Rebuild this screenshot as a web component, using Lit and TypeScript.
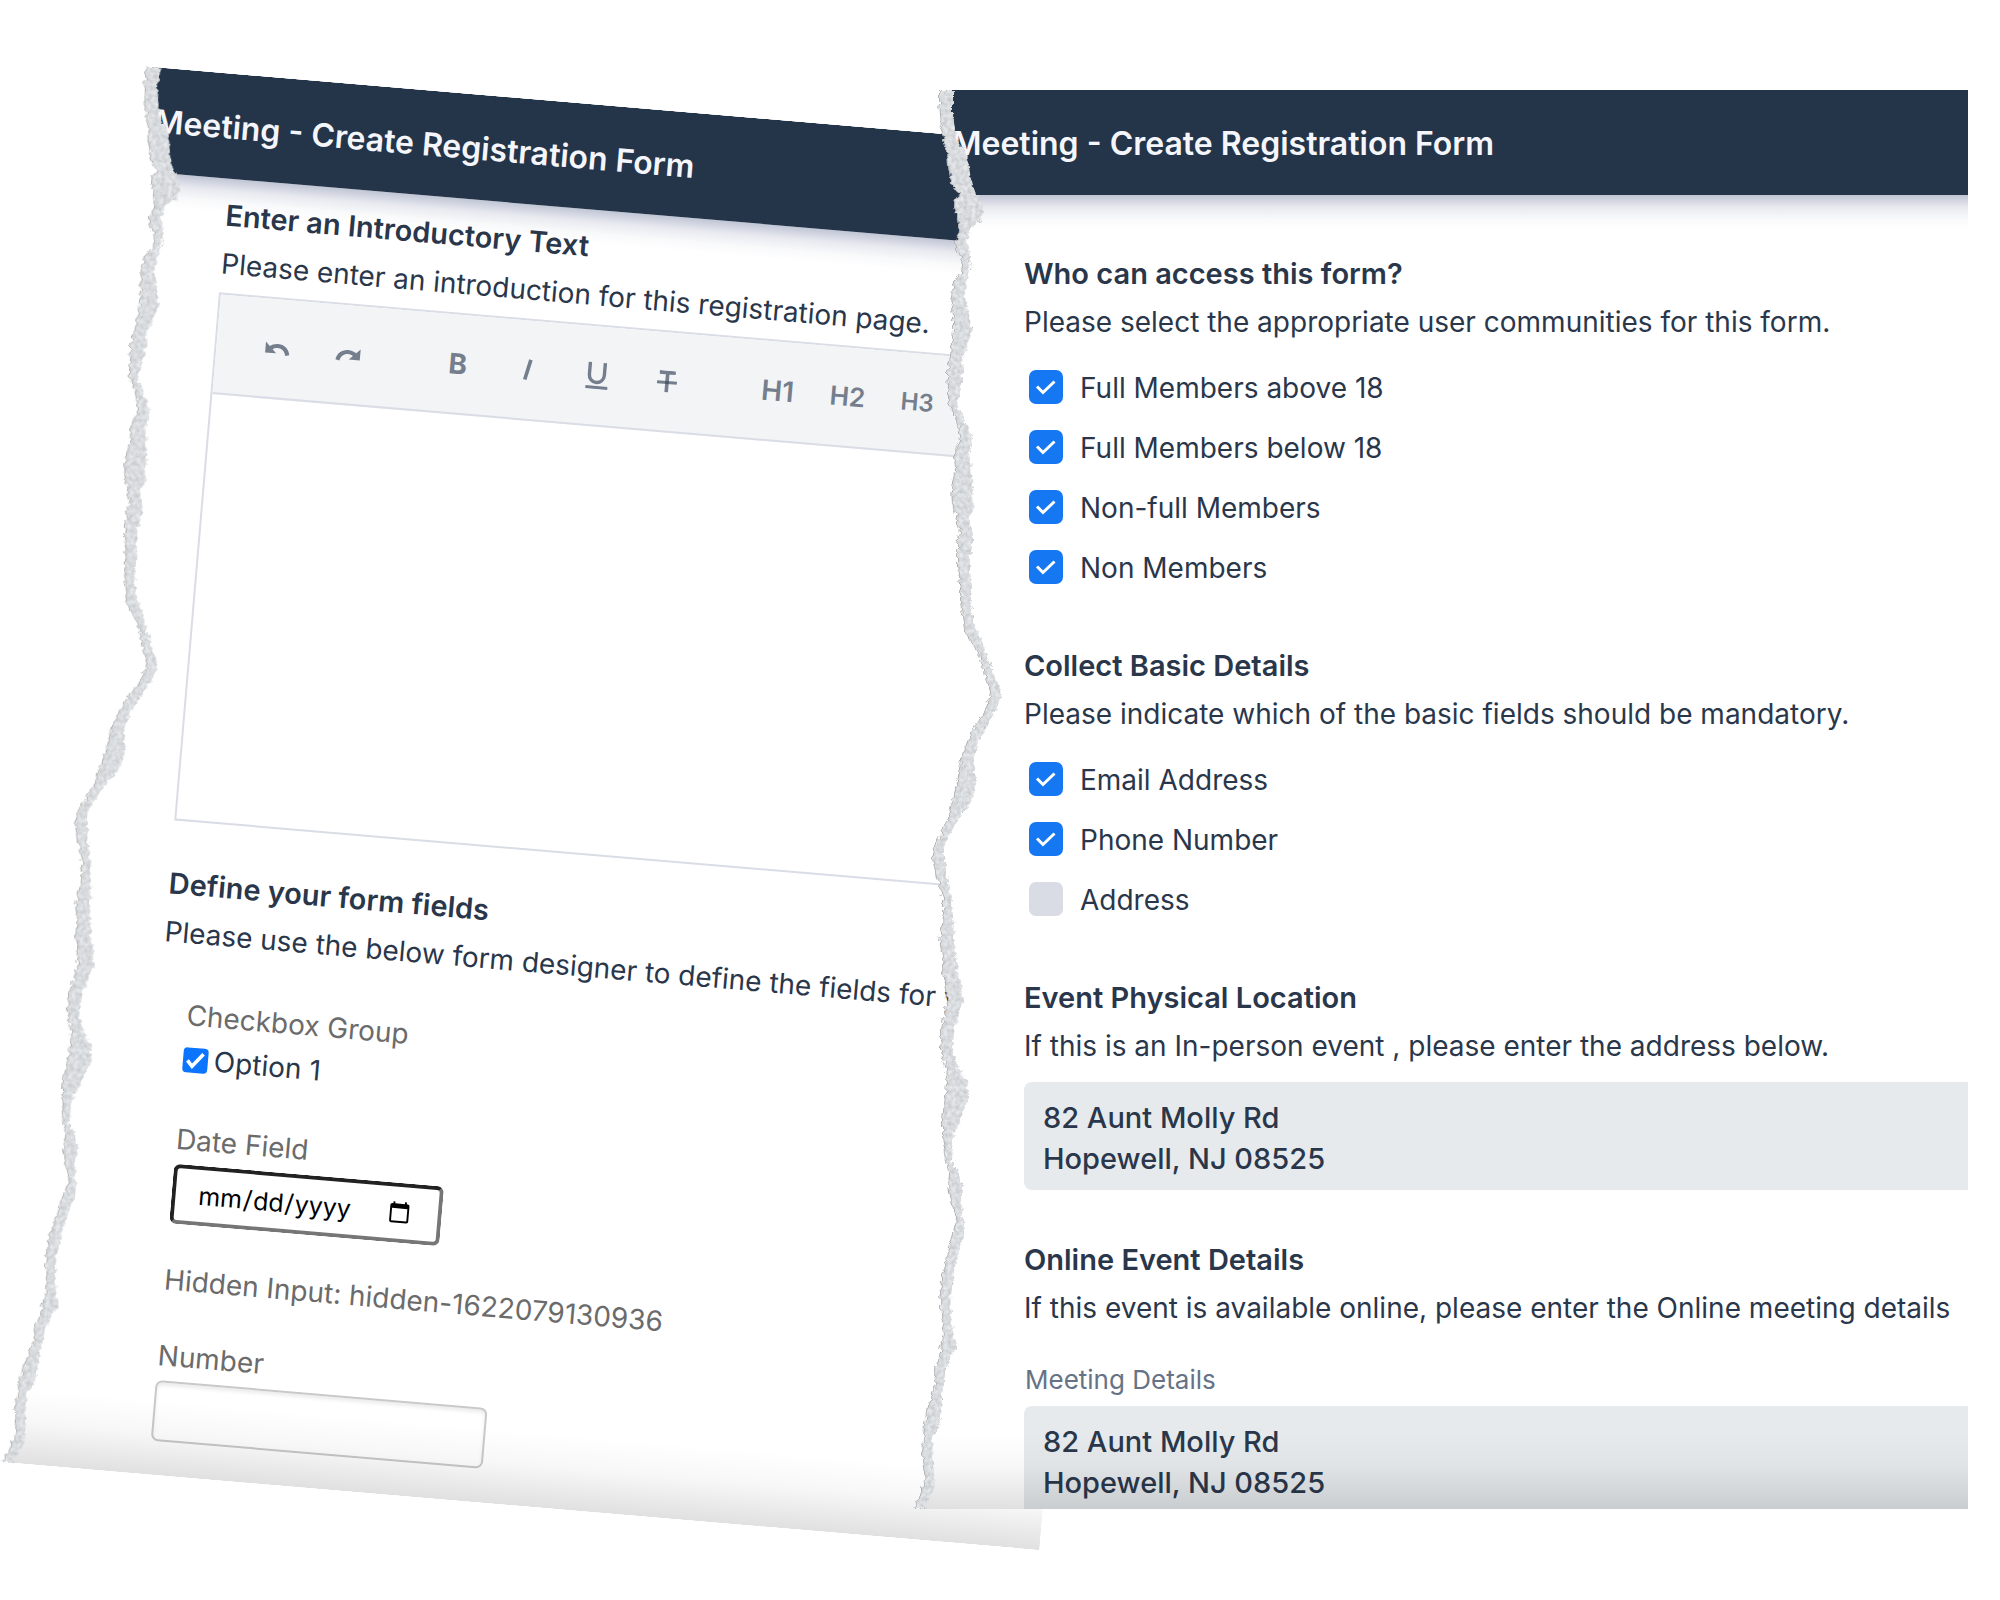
import { LitElement, html, svg, css, unsafeCSS } from "lit";
import { customElement, property } from "lit/decorators.js";

/* Torn edge profile: [y, outer x, inner x], measured down a sheet 1419 units tall. */
const TEAR_HEIGHT = 1419;
const TEAR: number[][] = [
  [0, 39, 53], [12, 39, 53], [24, 40, 53], [40, 41, 55], [53, 44, 58], [60, 47, 65], [77, 48, 69],
  [97, 52, 73], [103, 57, 76], [105, 60, 78], [109, 53, 80], [120, 55, 83], [130, 57, 80], [140, 59, 70],
  [150, 55, 67], [160, 55, 69], [167, 61, 70], [180, 62, 69], [193, 53, 66], [207, 51, 65],
  [227, 53, 69], [240, 53, 72], [257, 51, 67], [267, 50, 62], [283, 47, 63], [300, 48, 61],
  [315, 48, 56], [330, 57, 64], [347, 60, 72], [363, 54, 69], [380, 55, 71], [397, 51, 73],
  [415, 52, 74], [430, 57, 69], [443, 60, 73], [453, 57, 73], [465, 57, 70], [477, 57, 70],
  [493, 60, 71], [510, 60, 71], [527, 62, 72], [543, 65, 78], [563, 78, 86], [583, 84, 93],
  [602, 90, 102], [617, 87, 97], [635, 75, 87], [652, 68, 78], [670, 60, 73], [693, 57, 77],
  [712, 52, 71], [725, 48, 61], [743, 41, 50], [762, 31, 43], [777, 34, 46], [793, 39, 48],
  [810, 43, 52], [827, 43, 53], [852, 39, 54], [864, 43, 55], [877, 42, 57], [893, 45, 61],
  [910, 46, 64], [927, 44, 58], [943, 40, 53], [960, 41, 52], [977, 45, 58], [990, 46, 67],
  [1005, 45, 69], [1028, 42, 61], [1046, 42, 53], [1072, 45, 52], [1083, 49, 58], [1096, 48, 62],
  [1115, 52, 62], [1130, 57, 63], [1143, 52, 64], [1158, 49, 60], [1172, 46, 56], [1187, 41, 53],
  [1218, 40, 50], [1245, 44, 53], [1256, 41, 57], [1270, 38, 50], [1280, 34, 46], [1298, 35, 43],
  [1313, 29, 43], [1333, 24, 40], [1347, 23, 33], [1370, 22, 32], [1390, 25, 35], [1405, 20, 32],
  [1419, 14, 23],
];

const TEAR_SHAPE = [
  ...TEAR.map(([y, outer]) => `${outer},${y}`),
  ...[...TEAR].reverse().map(([y, , inner]) => `${inner},${y}`),
].join(" ");

const PAPER_CLIP = [
  ...TEAR.map(([y, outer, inner]) => `${Math.round((outer + inner) / 2)}px ${((y / TEAR_HEIGHT) * 100).toFixed(2)}%`),
  "100% 100%",
  "100% 0%",
].join(", ");

@customElement("torn-sheet")
export class TornSheet extends LitElement {
  static styles = css`
    :host {
      display: block;
      position: relative;
    }
    .paper {
      position: relative;
      background: linear-gradient(rgba(60, 75, 125, 0.32), rgba(60, 75, 125, 0.12) 35%, rgba(60, 75, 125, 0.03) 70%, rgba(60, 75, 125, 0)) 0 105px / 100% 34px no-repeat #fff;
      overflow: hidden;
      clip-path: polygon(${unsafeCSS(PAPER_CLIP)});
    }
    .bar {
      display: flex;
      align-items: center;
      box-sizing: border-box;
      height: 105px;
      padding: 3px 0 0 52px;
      background: #243449;
    }
    .title {
      margin: 0;
      font-size: 32px;
      line-height: 40px;
      font-weight: 600;
      color: #f4f6fc;
      white-space: nowrap;
    }
    .shade {
      position: absolute;
      inset: auto 0 0 0;
      height: 76px;
      background: linear-gradient(rgba(0, 0, 0, 0), rgba(0, 0, 0, 0.03) 45%, rgba(0, 0, 0, 0.12));
      pointer-events: none;
    }
    .tear {
      position: absolute;
      top: 0;
      left: 0;
      width: 110px;
      height: 100%;
      overflow: hidden;
      pointer-events: none;
    }
  `;

  @property() heading = "";

  render() {
    return html`
      <div class="paper">
        <header class="bar"><h1 class="title">${this.heading}</h1></header>
        <slot></slot>
        <div class="shade"></div>
      </div>
      <svg class="tear" viewBox="0 0 110 1419" preserveAspectRatio="none" aria-hidden="true">
        <defs>
          <filter id="fibre" x="-10" y="-10" width="130" height="1440" filterUnits="userSpaceOnUse" color-interpolation-filters="sRGB">
            <feTurbulence type="fractalNoise" baseFrequency="0.2" numOctaves="3" seed="4" result="ragged"></feTurbulence>
            <feDisplacementMap in="SourceGraphic" in2="ragged" scale="7" xChannelSelector="R" yChannelSelector="G" result="edge"></feDisplacementMap>
            <feTurbulence type="fractalNoise" baseFrequency="0.25" numOctaves="3" seed="9" result="grain"></feTurbulence>
            <feColorMatrix in="grain" type="matrix" values="0.2 0 0 0 0.75  0.2 0 0 0 0.76  0.2 0 0 0 0.77  0 0 0 0 1" result="tone"></feColorMatrix>
            <feComposite in="tone" in2="edge" operator="in" result="fibres"></feComposite>
            <feOffset in="edge" dx="1" dy="0" result="moved"></feOffset>
            <feComposite in="edge" in2="moved" operator="out" result="rim"></feComposite>
            <feColorMatrix in="rim" type="matrix" values="0 0 0 0 0.5  0 0 0 0 0.5  0 0 0 0 0.5  0 0 0 0.4 0" result="rimTone"></feColorMatrix>
            <feMerge>
              <feMergeNode in="fibres"></feMergeNode>
              <feMergeNode in="rimTone"></feMergeNode>
            </feMerge>
          </filter>
        </defs>
        <polygon points=${TEAR_SHAPE} fill="#dcdfe1" filter="url(#fibre)"></polygon>
      </svg>
    `;
  }
}

type Choice = { id: string; label: string; on: boolean };

const COMMUNITIES: Choice[] = [
  { id: "above", label: "Full Members above 18", on: true },
  { id: "below", label: "Full Members below 18", on: true },
  { id: "nonfull", label: "Non-full Members", on: true },
  { id: "non", label: "Non Members", on: true },
];

const BASICS: Choice[] = [
  { id: "email", label: "Email Address", on: true },
  { id: "phone", label: "Phone Number", on: true },
  { id: "address", label: "Address", on: false },
];

const ADDRESS = "82 Aunt Molly Rd\nHopewell, NJ 08525";

const undoIcon = svg`<path d="M1 3v11h11l-3.800-3.800c1.300-1.100 3-1.700 5-1.700 4 0 7.200 2.500 8.100 7.300l4-.9C24.500 8.600 19.700 4.500 13.300 4.500c-3.200 0-6 1.100-8.200 2.700z" fill="currentColor"/>`;

@customElement("app-root")
export class AppRoot extends LitElement {
  static styles = css`
    :host {
      display: block;
      overflow: hidden;
      background: #fff;
      color: #2a374b;
      font-family: Inter, "Liberation Sans", sans-serif;
      font-size: 28px;
    }
    .stage {
      display: grid;
      grid-template-columns: minmax(0, 793fr) minmax(0, 1068fr);
      align-items: start;
      padding: 63px 32px 91px 107px;
    }
    .back {
      width: 133%;
      transform: rotate(4.85deg);
      transform-origin: 0 0;
    }
    .front {
      margin-top: 27px;
    }
    .designer {
      padding: 13px 40px 34px 131px;
    }
    .setup {
      display: flex;
      flex-direction: column;
      gap: 46px;
      padding: 55px 0 0 124px;
    }
    h2,
    p {
      margin: 0;
      font-size: 28px;
      line-height: 48px;
      white-space: nowrap;
    }
    h2 {
      font-size: 29px;
      font-weight: 600;
    }
    .editor {
      margin: 5px 0 39px;
      border: 2px solid #dadde6;
    }
    .toolbar {
      display: flex;
      align-items: center;
      gap: 41px;
      height: 98px;
      padding-left: 26px;
      background: #f3f4f6;
      border-bottom: 2px solid #dadde6;
    }
    .tools {
      display: flex;
    }
    .tool {
      display: grid;
      place-items: center;
      width: 70px;
      height: 60px;
      padding: 0;
      border: 0;
      background: none;
      color: #747e8d;
      font: 600 28px/40px Inter, "Liberation Sans", sans-serif;
    }
    .bold {
      font-weight: 700;
    }
    .h2 {
      font-size: 26px;
    }
    .h3 {
      font-size: 24px;
    }
    .writing {
      display: block;
      box-sizing: border-box;
      width: 100%;
      height: 426px;
      padding: 20px;
      border: 0;
      resize: none;
      background: none;
      font: inherit;
    }
    .fields {
      display: flex;
      flex-direction: column;
      align-items: flex-start;
      gap: 36px;
      padding: 38px 0 0 29px;
    }
    .field {
      display: flex;
      flex-direction: column;
      align-items: flex-start;
      margin: 0;
      padding: 0;
      border: 0;
    }
    .caption {
      padding: 0;
      line-height: 40px;
      color: #6b6b6b;
      white-space: nowrap;
    }
    .option {
      display: flex;
      align-items: center;
      gap: 6px;
      height: 48px;
    }
    .box {
      display: grid;
      place-items: center;
    }
    .box > * {
      grid-area: 1 / 1;
    }
    .tick {
      appearance: none;
      width: 34px;
      height: 34px;
      margin: 0;
      border-radius: 7px;
      background: #d9dce5;
    }
    .tick:checked {
      background: #1677f2;
    }
    .tick + svg {
      visibility: hidden;
      pointer-events: none;
    }
    .tick:checked + svg {
      visibility: visible;
    }
    .small {
      width: 25px;
      height: 25px;
      border-radius: 4px;
    }
    .small:checked {
      background: #0b75ff;
    }
    .date,
    .number {
      box-sizing: border-box;
      margin-top: 5px;
      border-radius: 7px;
      background: #fff;
    }
    .date {
      width: 271px;
      height: 60px;
      padding: 0 24px 0 22px;
      border: 4px solid #767676;
      border-top-color: #222;
      border-left-color: #222;
      color: #000;
      font: 25px/36px Inter, "Liberation Sans", sans-serif;
    }
    .number {
      width: 333px;
      height: 61px;
      padding: 0 16px;
      border: 2px solid #c9c9c9;
      box-shadow: inset 0 3px 4px rgba(0, 0, 0, 0.08);
      font: inherit;
    }
    .checks {
      display: flex;
      flex-direction: column;
      gap: 26px;
      padding: 24px 0 12px 5px;
    }
    .check {
      display: flex;
      align-items: center;
      gap: 17px;
      height: 34px;
      white-space: nowrap;
    }
    .name {
      padding-top: 2px;
    }
    .area {
      display: block;
      box-sizing: border-box;
      width: 100%;
      height: 108px;
      margin: 12px 0 0;
      padding: 15px 19px 0;
      border: 0;
      border-radius: 8px 0 0 8px;
      resize: none;
      overflow: hidden;
      background: #e6eaed;
      color: inherit;
      font: 500 29px/41px Inter, "Liberation Sans", sans-serif;
    }
    .note {
      display: block;
      padding: 28px 0 0 1px;
      font-size: 26px;
      line-height: 40px;
      color: #667386;
    }
    .cut {
      height: 103px;
      margin-top: 6px;
      border-radius: 8px 0 0 0;
    }
  `;

  private checks(list: Choice[]) {
    return html`<div class="checks">
      ${list.map(
        (c) => html`<label class="check">
          <span class="box">
            <input class="tick" type="checkbox" name=${c.id} .checked=${c.on} />
            <svg width="24" height="24" viewBox="0 0 24 24" fill="none" stroke="#fff" stroke-width="3" aria-hidden="true">
              <path d="M3 11.500l6 6L20.500 6.500" />
            </svg>
          </span>
          <span class="name">${c.label}</span>
        </label>`
      )}
    </div>`;
  }

  private editor() {
    return html`<div class="editor">
      <div class="toolbar" role="toolbar" aria-label="Formatting">
        <div class="tools">
          <button class="tool" type="button" aria-label="Undo">
            <svg width="27" height="19" viewBox="0 0 27 19">${undoIcon}</svg>
          </button>
          <button class="tool" type="button" aria-label="Redo">
            <svg width="27" height="19" viewBox="0 0 27 19"><g transform="matrix(-1 0 0 1 27 0)">${undoIcon}</g></svg>
          </button>
        </div>
        <div class="tools">
          <button class="tool bold" type="button" aria-label="Bold">B</button>
          <button class="tool" type="button" aria-label="Italic">
            <svg width="10" height="22" viewBox="0 0 10 22"><path d="M7.500 1L3 21" stroke="currentColor" stroke-width="3.600" /></svg>
          </button>
          <button class="tool" type="button" aria-label="Underline">
            <svg width="24" height="28" viewBox="0 0 24 28" fill="none" stroke="currentColor">
              <path d="M4 1v12.500a7.500 7.500 0 0 0 15 0V1" stroke-width="3.400" />
              <path d="M1 26h22" stroke-width="3" />
            </svg>
          </button>
          <button class="tool" type="button" aria-label="Strikethrough">
            <svg width="20" height="22" viewBox="0 0 20 22" fill="none" stroke="currentColor">
              <path d="M2 2h16M10 2v20" stroke-width="3.600" />
              <path d="M0 12h20" stroke-width="3" />
              <path d="M8.200 12h3.600" stroke="#4c586a" stroke-width="3" />
            </svg>
          </button>
        </div>
        <div class="tools">
          <button class="tool" type="button">H1</button>
          <button class="tool h2" type="button">H2</button>
          <button class="tool h3" type="button">H3</button>
        </div>
      </div>
      <textarea class="writing" aria-labelledby="intro"></textarea>
    </div>`;
  }

  render() {
    return html`
      <main class="stage">
        <torn-sheet class="back" heading="Meeting - Create Registration Form">
          <div class="designer">
            <h2 id="intro">Enter an Introductory Text</h2>
            <p>Please enter an introduction for this registration page.</p>
            ${this.editor()}
            <h2>Define your form fields</h2>
            <p>Please use the below form designer to define the fields for your</p>
            <div class="fields">
              <fieldset class="field">
                <legend class="caption">Checkbox Group</legend>
                <label class="option">
                  <span class="box">
                    <input class="tick small" type="checkbox" .checked=${true} />
                    <svg width="25" height="25" viewBox="0 0 25 25" fill="none" stroke="#fff" stroke-width="3.600" aria-hidden="true">
                      <path d="M4.500 13l5 5.500L20 5.500" />
                    </svg>
                  </span>
                  <span>Option 1</span>
                </label>
              </fieldset>
              <div class="field">
                <label class="caption" for="date">Date Field</label>
                <input class="date" id="date" type="date" />
              </div>
              <div class="caption">Hidden Input: hidden-1622079130936</div>
              <div class="field">
                <label class="caption" for="number">Number</label>
                <input class="number" id="number" type="number" />
              </div>
            </div>
          </div>
        </torn-sheet>
        <torn-sheet class="front" heading="Meeting - Create Registration Form">
          <div class="setup">
            <section>
              <h2>Who can access this form?</h2>
              <p>Please select the appropriate user communities for this form.</p>
              ${this.checks(COMMUNITIES)}
            </section>
            <section>
              <h2>Collect Basic Details</h2>
              <p>Please indicate which of the basic fields should be mandatory.</p>
              ${this.checks(BASICS)}
            </section>
            <section>
              <h2 id="place">Event Physical Location</h2>
              <p>If this is an In-person event , please enter the address below.</p>
              <textarea class="area" aria-labelledby="place" .value=${ADDRESS}></textarea>
            </section>
            <section>
              <h2>Online Event Details</h2>
              <p>If this event is available online, please enter the Online meeting details</p>
              <label class="note" for="meeting">Meeting Details</label>
              <textarea class="area cut" id="meeting" .value=${ADDRESS}></textarea>
            </section>
          </div>
        </torn-sheet>
      </main>
    `;
  }
}
